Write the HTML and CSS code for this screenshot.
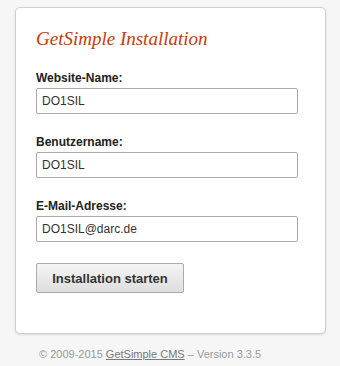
FILE: index.html
```html
<!DOCTYPE html>
<html lang="de">
<head>
    <meta charset="UTF-8">
    <title>GetSimple Installation</title>
    <link rel="stylesheet" href="styles.css">
</head>
<body>
    <div class="wrapper">
        <div class="main">
            <h3>GetSimple Installation</h3>
            <form class="install-form">
                <p class="field">
                    <label for="sitename">Website-Name:</label>
                    <input type="text" id="sitename" class="text" value="DO1SIL">
                </p>
                <p class="field">
                    <label for="user">Benutzername:</label>
                    <input type="text" id="user" class="text" value="DO1SIL">
                </p>
                <p class="field">
                    <label for="email">E-Mail-Adresse:</label>
                    <input type="text" id="email" class="text" value="DO1SIL@darc.de">
                </p>
                <p class="submit-row">
                    <button type="button" class="submit">Installation starten</button>
                </p>
            </form>
        </div>
        <p class="footer">&copy; 2009-2015 <a href="#">GetSimple CMS</a> &ndash; Version 3.3.5</p>
    </div>
</body>
</html>
```
FILE: styles.css
```css
body, html {
    margin: 0;
    padding: 0;
    background: #f6f6f6;
    font-family: "Liberation Sans", Arial, sans-serif;
    color: #333;
}
.wrapper {
    padding: 7px 14px 0 15px;
}
.main {
    background: #fff;
    border: 1px solid #cfcfcf;
    border-radius: 5px;
    box-shadow: 0 1px 2px rgba(0, 0, 0, 0.12);
    padding: 19px 20px 40px;
}
.main h3 {
    margin: 0 0 20px;
    font-family: "Liberation Serif", Georgia, serif;
    font-style: italic;
    font-weight: normal;
    font-size: 19px;
    line-height: 24px;
    color: #cf3805;
}
.field {
    margin: 0 0 21px;
}
.field label {
    display: block;
    font-size: 12px;
    line-height: 15px;
    font-weight: bold;
    color: #222;
    margin-bottom: 2px;
}
.field input.text {
    display: block;
    box-sizing: border-box;
    width: 262px;
    height: 26px;
    margin: 0;
    padding: 0 5px;
    border: 1px solid #aaa;
    border-radius: 2px;
    font-family: "Liberation Sans", Arial, sans-serif;
    font-size: 12px;
    color: #333;
    background: #fff;
}
.submit-row {
    margin: 0;
    padding-top: -1px;
}
.submit {
    box-sizing: border-box;
    width: 148px;
    height: 30px;
    margin: 0;
    padding: 0;
    border: 1px solid #aaa;
    border-radius: 2px;
    background: linear-gradient(to bottom, #f5f5f5, #dedede);
    font-family: "Liberation Sans", Arial, sans-serif;
    font-size: 13px;
    font-weight: bold;
    color: #333;
    cursor: pointer;
}
.footer {
    margin: 13px 0 0;
    padding-left: 24px;
    font-size: 11px;
    line-height: 14px;
    color: #999;
}
.footer a {
    color: #777;
}
```
